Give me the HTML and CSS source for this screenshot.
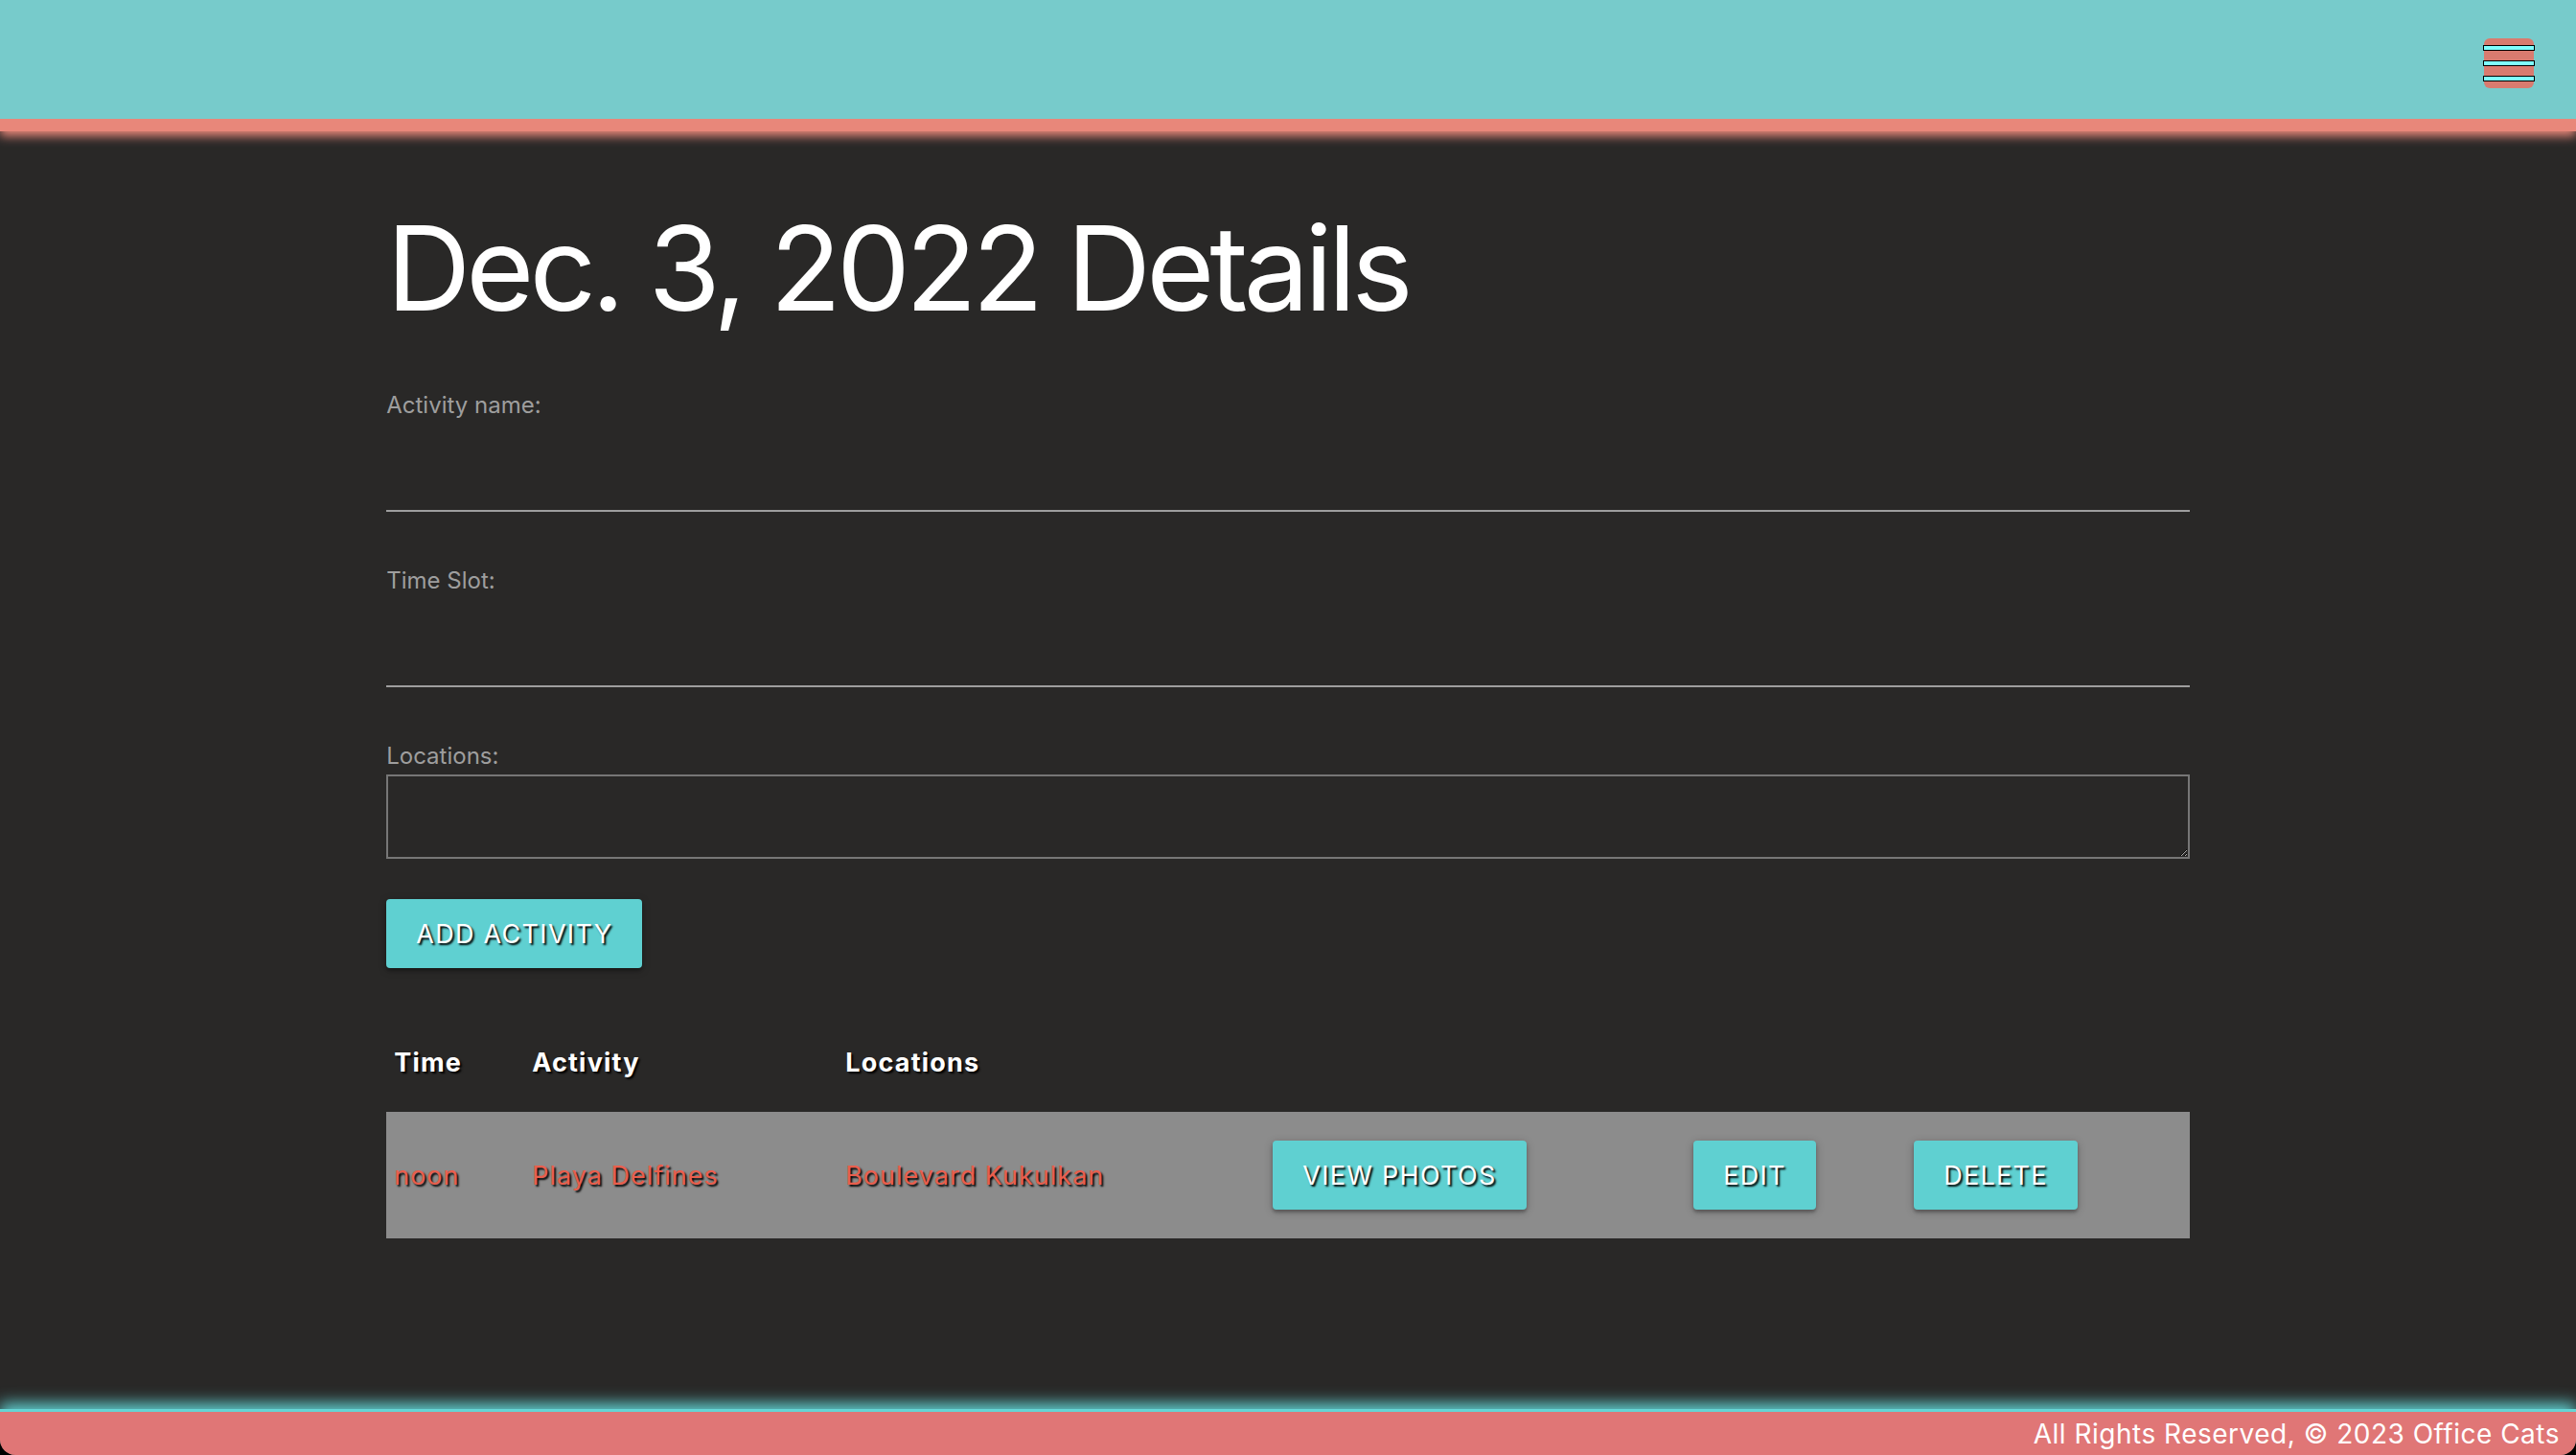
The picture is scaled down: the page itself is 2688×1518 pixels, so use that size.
FILE: index.html
```html
<!DOCTYPE html>
<html lang="en">
<head>
<meta charset="utf-8">
<title>Dec. 3, 2022 Details</title>
<link rel="stylesheet" href="styles.css">
</head>
<body>
<div class="page">
  <header class="topbar">
    <button class="menu-btn" type="button" aria-label="Menu">
      <span class="menu-bar"></span>
      <span class="menu-bar"></span>
      <span class="menu-bar"></span>
    </button>
  </header>

  <main class="container">
    <h1 class="page-title">Dec. 3, 2022 Details</h1>

    <form class="activity-form">
      <div class="field">
        <label class="field-label" for="activity-name">Activity name:</label>
        <input class="line-input" id="activity-name" type="text">
      </div>
      <div class="field">
        <label class="field-label" for="time-slot">Time Slot:</label>
        <input class="line-input" id="time-slot" type="text">
      </div>
      <div class="field field-area">
        <label class="field-label" for="locations">Locations:</label>
        <textarea class="area-input" id="locations"></textarea>
      </div>
      <button class="btn btn-add" type="button">Add Activity</button>
    </form>

    <table class="activity-table">
      <colgroup>
        <col class="col-time">
        <col class="col-activity">
        <col class="col-locations">
        <col class="col-photos">
        <col class="col-edit">
        <col class="col-delete">
      </colgroup>
      <thead>
        <tr>
          <th>Time</th>
          <th>Activity</th>
          <th>Locations</th>
          <th></th>
          <th></th>
          <th></th>
        </tr>
      </thead>
      <tbody>
        <tr class="data-row">
          <td>noon</td>
          <td>Playa Delfines</td>
          <td>Boulevard Kukulkan</td>
          <td><button class="btn" type="button">View Photos</button></td>
          <td><button class="btn" type="button">Edit</button></td>
          <td><button class="btn" type="button">Delete</button></td>
        </tr>
      </tbody>
    </table>
  </main>

  <footer class="site-footer">All Rights Reserved, © 2023 Office Cats</footer>
</div>
</body>
</html>
```

FILE: styles.css
```css
html, body {
  margin: 0;
  padding: 0;
}

body {
  background: #000;
  font-family: "Inter", "Roboto", "Liberation Sans", sans-serif;
  color: #fff;
}

.page {
  min-height: 100vh;
  display: flex;
  flex-direction: column;
  background: #292827;
  border-radius: 0 0 16px 16px;
  overflow: hidden;
}

/* ---------- top bar ---------- */
.topbar {
  height: 84px;
  background: #77cbcb;
  border-bottom: 13px solid #e8877a;
  box-shadow: 0 5px 10px #e8877a;
  display: flex;
  justify-content: flex-end;
  align-items: flex-start;
  padding: 40px 44px 0 0;
  box-sizing: content-box;
  position: relative;
  z-index: 2;
}

.menu-btn {
  width: 52px;
  height: 52px;
  padding: 7px 0;
  box-sizing: border-box;
  background: #d97b6f;
  border: none;
  border-radius: 6px;
  display: flex;
  flex-direction: column;
  align-items: center;
  gap: 10px;
  cursor: pointer;
}

.menu-bar {
  display: block;
  width: 54px;
  height: 6px;
  margin: 0 -1px;
  box-sizing: border-box;
  background: #7fffff;
  border: 1px solid #000;
  flex: none;
}

/* ---------- main ---------- */
.container {
  flex: 1;
  width: 70%;
  margin: 0 auto;
}

.page-title {
  margin: 70px 0 0;
  font-family: "Inter", sans-serif;
  font-weight: 400;
  font-size: 122px;
  line-height: 146px;
  letter-spacing: -5px;
  color: #fff;
}

.activity-form {
  margin-top: 55px;
}

.field {
  margin-bottom: 57px;
}

.field-label {
  display: block;
  font-size: 24px;
  line-height: 30px;
  color: #9e9e9e;
}

.line-input {
  display: block;
  width: 100%;
  height: 96px;
  margin: 0;
  padding: 0;
  box-sizing: border-box;
  background: transparent;
  border: none;
  border-bottom: 2px solid #9e9e9e;
  outline: none;
  color: #fff;
  font: inherit;
  font-size: 26px;
}

.field-area {
  margin-bottom: 42px;
}
.field-area .field-label {
  margin-bottom: 4px;
}

.area-input {
  display: block;
  width: 100%;
  height: 88px;
  margin: 0;
  box-sizing: border-box;
  background: transparent;
  border: 2px solid #767676;
  color: #fff;
  font: inherit;
  font-size: 26px;
  outline: none;
}

/* ---------- buttons ---------- */
.btn {
  height: 72px;
  padding: 0 31px;
  background: #5fd0d1;
  border: none;
  border-radius: 4px;
  color: #fff;
  font-family: "Inter", sans-serif;
  font-size: 27px;
  font-weight: 400;
  letter-spacing: 1.3px;
  text-transform: uppercase;
  text-shadow: 2px 2px 2px #000;
  box-shadow: 0 3px 3px rgba(0, 0, 0, 0.22), 0 2px 8px rgba(0, 0, 0, 0.25);
  cursor: pointer;
  white-space: nowrap;
}

/* ---------- table ---------- */
.activity-table {
  width: 100%;
  margin-top: 46px;
  border-collapse: collapse;
  table-layout: fixed;
}

.col-time { width: 144px; }
.col-activity { width: 327px; }
.col-locations { width: 446px; }
.col-photos { width: 439px; }
.col-edit { width: 230px; }
.col-delete { width: 296px; }

.activity-table th {
  height: 104px;
  padding: 0 8px;
  text-align: left;
  vertical-align: middle;
  font-size: 27px;
  font-weight: 700;
  letter-spacing: 1.2px;
  color: #fff;
  text-shadow: 2px 2px 2px #000;
}

.data-row {
  background: #8c8c8c;
}

.data-row td {
  height: 132px;
  padding: 0 8px;
  vertical-align: middle;
  font-size: 27px;
  letter-spacing: 1px;
  color: #e95e4c;
  text-shadow: 2px 2px 2px #000;
}

/* ---------- footer ---------- */
.site-footer {
  height: 45px;
  background: #e07676;
  border-top: 3px solid #66d4d4;
  box-shadow: 0 -6px 16px #5fcfd0;
  padding: 0 17px 0 0;
  text-align: right;
  font-size: 28px;
  letter-spacing: 0.5px;
  line-height: 46px;
  color: #fff;
  position: relative;
}
```
